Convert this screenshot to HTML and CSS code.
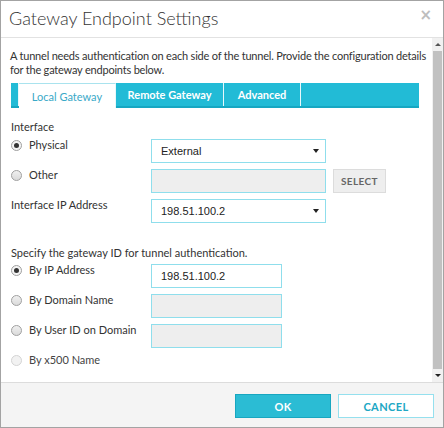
FILE: index.html
```html
<!DOCTYPE html>
<html>
<head>
<meta charset="utf-8">
<link rel="stylesheet" href="styles.css">
</head>
<body>
<div class="dialog">
  <div class="header">
    <div class="title">Gateway Endpoint Settings</div>
    <div class="close">×</div>
  </div>
  <div class="main">
    <div class="content">
      <p class="desc">A tunnel needs authentication on each side of the tunnel. Provide the configuration details for the gateway endpoints below.</p>
      <div class="tabs">
        <div class="tab-lead"></div>
        <div class="tab active">Local Gateway</div>
        <div class="tab">Remote Gateway</div>
        <div class="tab">Advanced</div>
        <div class="tab-fill"></div>
      </div>
      <div class="section-label">Interface</div>
      <div class="form">
        <div class="row">
          <label class="radio-label"><span class="radio checked"></span>Physical</label>
          <div class="select"><span>External</span><span class="caret"></span></div>
        </div>
        <div class="row">
          <label class="radio-label"><span class="radio"></span>Other</label>
          <div class="input disabled"></div>
          <div class="btn-select">SELECT</div>
        </div>
        <div class="row">
          <label class="plain-label">Interface IP Address</label>
          <div class="select"><span>198.51.100.2</span><span class="caret"></span></div>
        </div>
      </div>
      <div class="section-label spec">Specify the gateway ID for tunnel authentication.</div>
      <div class="form second">
        <div class="row">
          <label class="radio-label"><span class="radio checked"></span>By IP Address</label>
          <div class="input short">198.51.100.2</div>
        </div>
        <div class="row">
          <label class="radio-label"><span class="radio"></span>By Domain Name</label>
          <div class="input short disabled"></div>
        </div>
        <div class="row">
          <label class="radio-label"><span class="radio"></span>By User ID on Domain</label>
          <div class="input short disabled"></div>
        </div>
        <div class="row">
          <label class="radio-label faded"><span class="radio light"></span>By x500 Name</label>
        </div>
      </div>
    </div>
    <div class="scrollbar">
      <div class="arrow up"></div>
      <div class="thumb"></div>
      <div class="arrow down"></div>
    </div>
  </div>
  <div class="footer">
    <div class="btn ok">OK</div>
    <div class="btn cancel">CANCEL</div>
  </div>
</div>
</body>
</html>
```

FILE: styles.css
```css
html, body {
  margin: 0;
  padding: 0;
  background: #ffffff;
}
.dialog {
  width: 444px;
  height: 428px;
  box-sizing: border-box;
  border: 1px solid #a3a3a3;
  display: flex;
  flex-direction: column;
  font-family: "Lato", "Open Sans", sans-serif;
  color: #333333;
  background: #fff;
}
.header {
  height: 37px;
  box-sizing: border-box;
  border-bottom: 1px solid #e2e2e2;
  display: flex;
  align-items: center;
  justify-content: space-between;
  padding: 0 11px 2px 8px;
}
.title {
  font-size: 18px;
  font-weight: 300;
  color: #333;
}
.close {
  font-size: 15px;
  font-weight: 700;
  color: #bdbdbd;
  font-family: "DejaVu Sans", sans-serif;
  margin-top: -6px;
}
.main {
  flex: 1;
  display: flex;
  min-height: 0;
  border-bottom: 1px solid #dcdcdc;
}
.content {
  flex: 1;
  padding: 11px 0 0 9px;
  overflow: hidden;
}
.desc {
  margin: 0;
  font-size: 11px;
  line-height: 14px;
  letter-spacing: -0.2px;
  padding-right: 0;
}
.tabs {
  display: flex;
  margin-top: 6px;
  width: 408px;
  height: 25px;
  box-sizing: border-box;
  margin-left: 1px;
  background: #22bbd6;
  border-bottom: 2px solid #16a7c2;
}
.tab-lead {
  width: 7px;
  border-right: 1px solid #e8f8fb;
}
.tab {
  display: flex;
  align-items: center;
  justify-content: center;
  font-size: 11px;
  font-weight: 700;
  color: #ffffff;
  border-right: 1px solid #e8f8fb;
  box-sizing: border-box;
}
.tab.active {
  background: #ffffff;
  color: #3aa9c8;
  font-weight: 400;
  border-top: 1px solid #a9e3ee;
  margin-bottom: -2px;
  width: 97px;
}
.tab:nth-child(3) { width: 108px; }
.tab:nth-child(4) { width: 77px; }
.tab-fill { flex: 1; }
.section-label {
  font-size: 11px;
  line-height: 14px;
  margin-top: 12px;
  margin-left: 1px;
}
.section-label.spec {
  margin-top: 23px;
}
.form {
  display: flex;
  flex-direction: column;
  gap: 6px;
  margin-top: 5px;
  margin-left: 1px;
}
.form.second {
  margin-top: 4px;
}
.row {
  display: flex;
  align-items: flex-start;
  height: 24px;
}
.radio-label, .plain-label {
  width: 140px;
  display: flex;
  align-items: center;
  font-size: 11px;
  line-height: 14px;
  margin-top: -1px;
  flex-shrink: 0;
}
.radio-label.faded { color: #444; }
.radio {
  width: 9px;
  height: 9px;
  border-radius: 50%;
  border: 1px solid #a0a0a0;
  background: linear-gradient(#f0f0f0, #dadada);
  margin: 0 7px 0 0;
  box-sizing: content-box;
  position: relative;
}
.radio.checked {
  background: #f4f4f4;
}
.radio.checked::after {
  content: "";
  position: absolute;
  left: 2px;
  top: 2px;
  width: 5px;
  height: 5px;
  border-radius: 50%;
  background: #333;
}
.radio.light {
  border-color: #d4d4d4;
  background: #f2f2f2;
}
.select, .input {
  width: 175px;
  height: 24px;
  box-sizing: border-box;
  border: 1px solid #8fdeec;
  background: #fff;
  display: flex;
  align-items: center;
  justify-content: space-between;
  padding: 0 6px 0 9px;
  font-family: "Liberation Sans", Arial, sans-serif;
  font-size: 11px;
  color: #222;
}
.input.short { width: 131px; }
.input.disabled {
  background: #eeeeee;
}
.caret {
  width: 0;
  height: 0;
  border-left: 3px solid transparent;
  border-right: 3px solid transparent;
  border-top: 4px solid #222;
}
.btn-select {
  margin-left: 7px;
  width: 53px;
  height: 24px;
  box-sizing: border-box;
  border: 1px solid #dcdcdc;
  background: #eeeeee;
  display: flex;
  align-items: center;
  justify-content: center;
  font-size: 10px;
  font-weight: 700;
  color: #666;
  letter-spacing: 0.4px;
}
.scrollbar {
  width: 11px;
  background: #f1f1f1;
  display: flex;
  flex-direction: column;
}
.arrow {
  height: 13px;
  display: flex;
  align-items: center;
  justify-content: center;
}
.arrow::before {
  content: "";
  width: 0;
  height: 0;
  border-left: 3px solid transparent;
  border-right: 3px solid transparent;
}
.arrow.up::before { border-bottom: 3px solid #555; }
.arrow.down::before { border-top: 3px solid #222; }
.thumb {
  flex: 1;
  background: #c1c1c1;
  margin: 0 1px;
}
.footer {
  height: 44px;
  background: #f4f4f4;
  display: flex;
  justify-content: flex-end;
  align-items: flex-start;
  gap: 7px;
  padding: 11px 9px 0 0;
  box-sizing: border-box;
}
.btn {
  width: 96px;
  height: 24px;
  box-sizing: border-box;
  display: flex;
  align-items: center;
  justify-content: center;
  font-size: 11px;
  font-weight: 700;
  letter-spacing: 0.4px;
}
.btn.ok {
  background: #2bbcd4;
  border: 1px solid #18a6c0;
  color: #fff;
}
.btn.cancel {
  background: #fff;
  border: 1px solid #95e0ee;
  color: #20a7c4;
}
```
